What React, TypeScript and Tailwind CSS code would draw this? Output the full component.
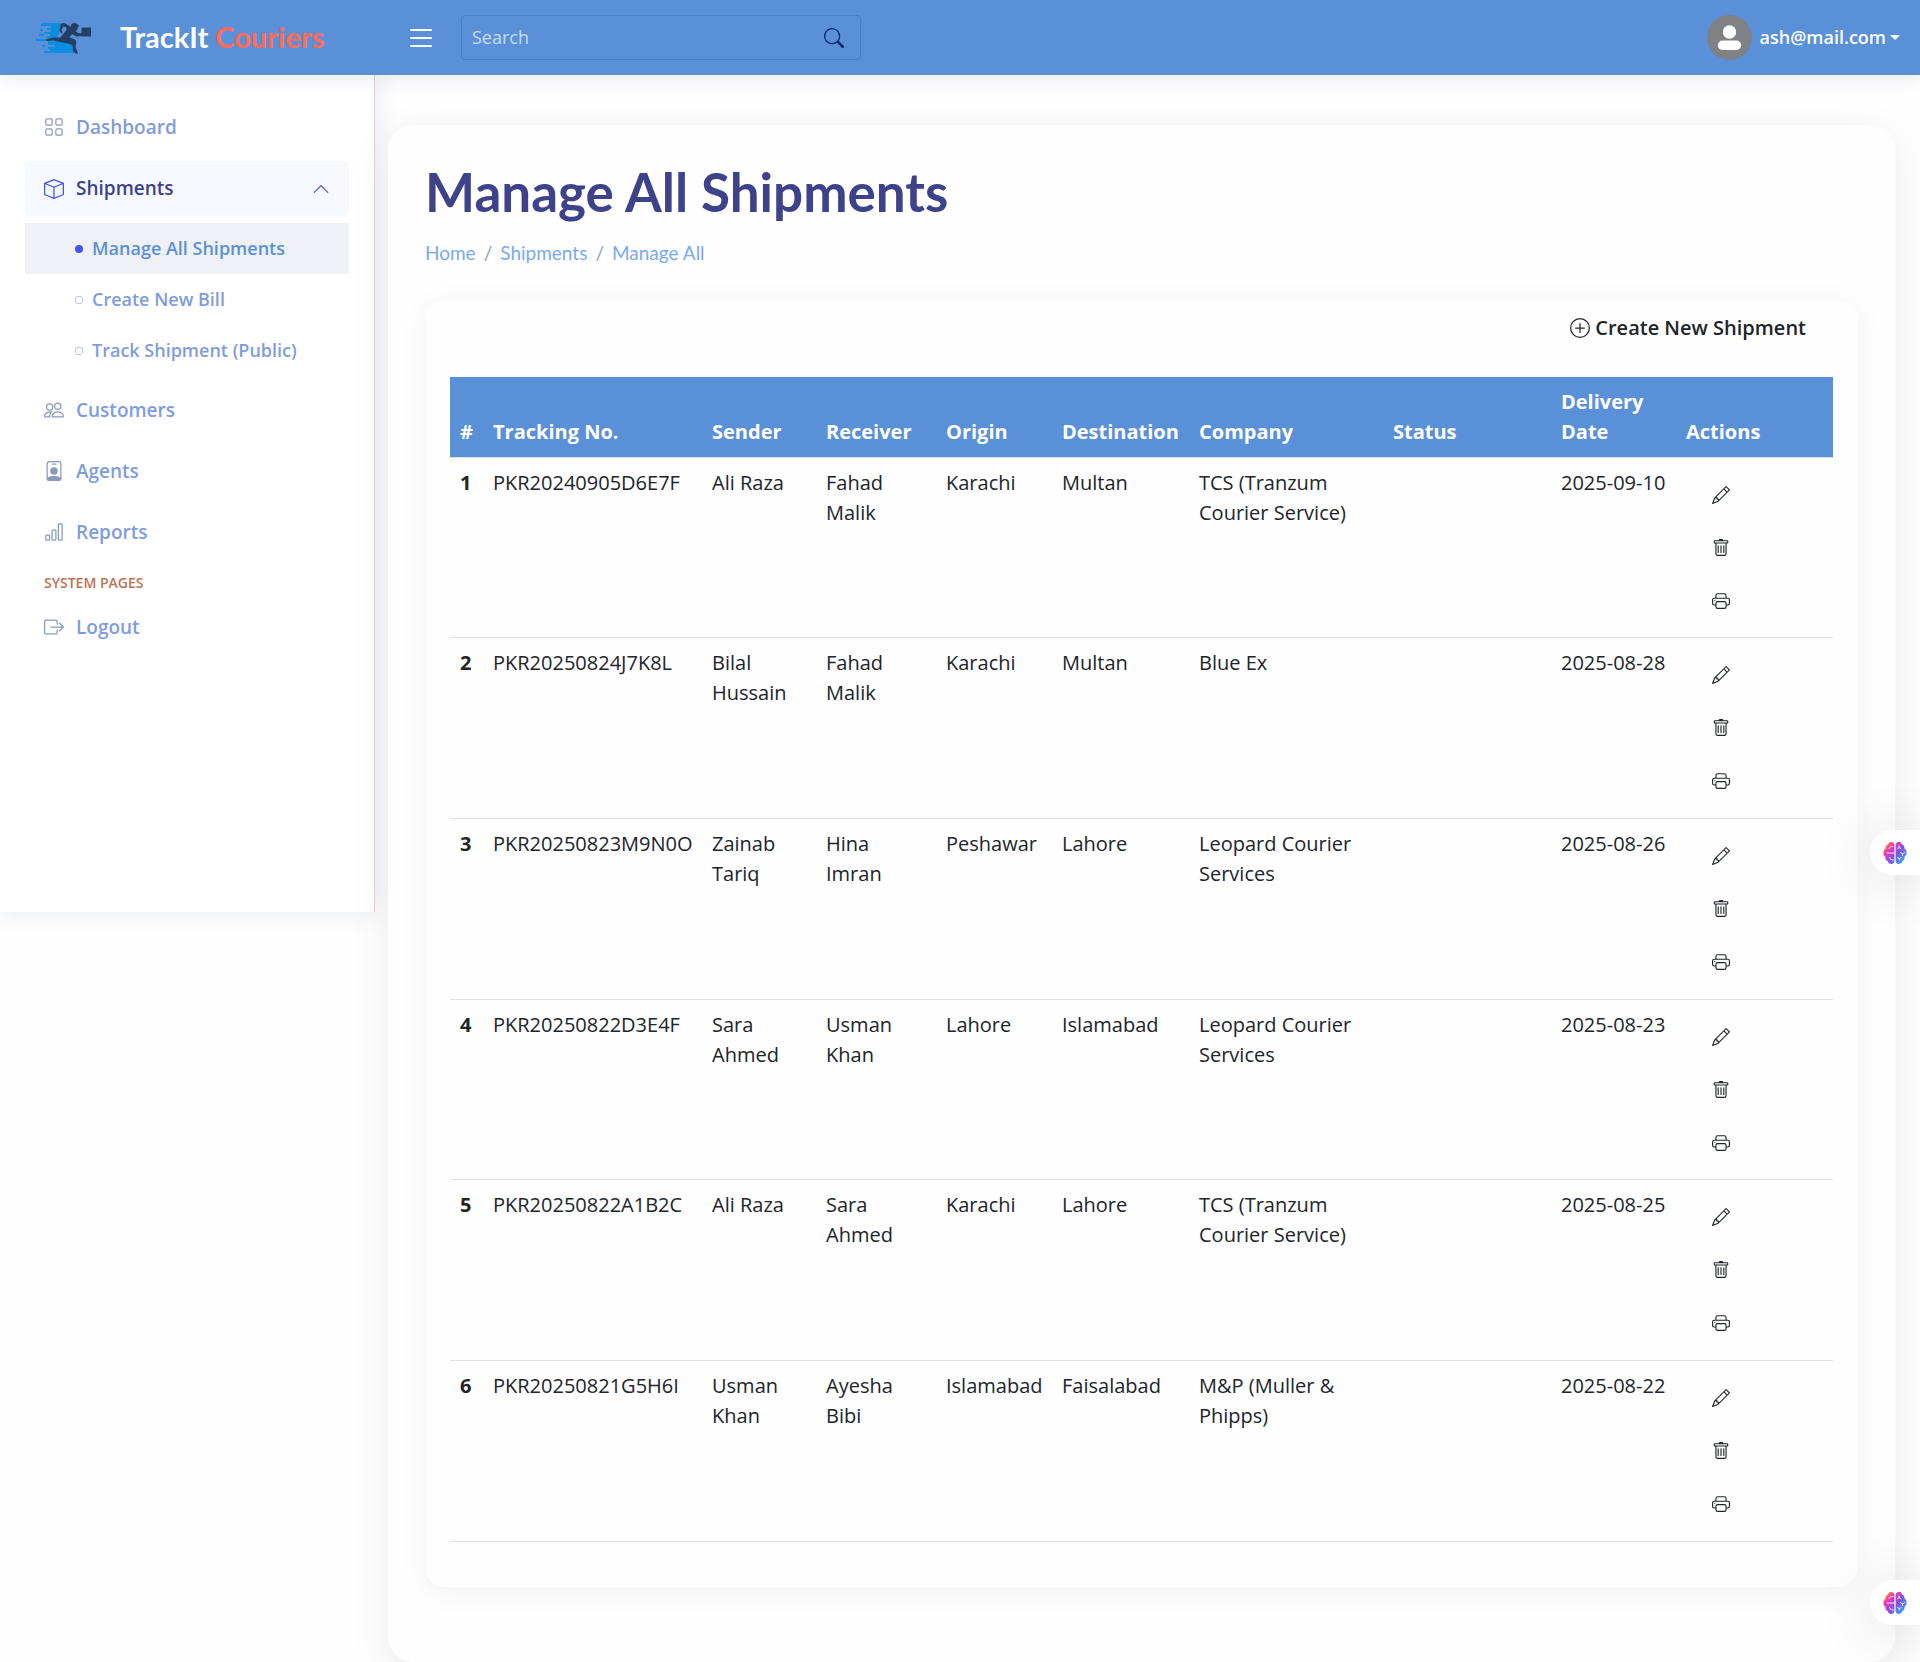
import React from "react";
import {
  BsBarChart, BsBox, BsBoxArrowRight, BsChevronUp, BsCircle, BsCircleFill, BsGrid, BsList,
  BsPencil, BsPeople, BsPersonBadge, BsPlusCircle, BsPrinter, BsSearch, BsTrash,
} from "react-icons/bs";

type Shipment = {
  tracking: string;
  sender: string;
  receiver: string;
  origin: string;
  destination: string;
  company: string;
  date: string;
};

const shipments: Shipment[] = [
  { tracking: "PKR20240905D6E7F", sender: "Ali Raza", receiver: "Fahad Malik", origin: "Karachi", destination: "Multan", company: "TCS (Tranzum Courier Service)", date: "2025-09-10" },
  { tracking: "PKR20250824J7K8L", sender: "Bilal Hussain", receiver: "Fahad Malik", origin: "Karachi", destination: "Multan", company: "Blue Ex", date: "2025-08-28" },
  { tracking: "PKR20250823M9N0O", sender: "Zainab Tariq", receiver: "Hina Imran", origin: "Peshawar", destination: "Lahore", company: "Leopard Courier Services", date: "2025-08-26" },
  { tracking: "PKR20250822D3E4F", sender: "Sara Ahmed", receiver: "Usman Khan", origin: "Lahore", destination: "Islamabad", company: "Leopard Courier Services", date: "2025-08-23" },
  { tracking: "PKR20250822A1B2C", sender: "Ali Raza", receiver: "Sara Ahmed", origin: "Karachi", destination: "Lahore", company: "TCS (Tranzum Courier Service)", date: "2025-08-25" },
  { tracking: "PKR20250821G5H6I", sender: "Usman Khan", receiver: "Ayesha Bibi", origin: "Islamabad", destination: "Faisalabad", company: "M&P (Muller & Phipps)", date: "2025-08-22" },
];

const columns = [
  { label: "#", width: "w-[33px]" },
  { label: "Tracking No.", width: "w-[219px]" },
  { label: "Sender", width: "w-[114px]" },
  { label: "Receiver", width: "w-[120px]" },
  { label: "Origin", width: "w-[116px]" },
  { label: "Destination", width: "w-[137px]" },
  { label: "Company", width: "w-[194px]" },
  { label: "Status", width: "w-[168px]" },
  { label: "Delivery Date", width: "w-[125px]" },
  { label: "Actions", width: "w-[157px]" },
];

function Logo() {
  return (
    <svg viewBox="0 0 56 32" className="h-8 w-14" aria-hidden="true">
      <g fill="#0a8fe0">
        <path d="M5 1h20l-1 9-3 6H10v-2h4v-2H8v-2h7V8h-4V6h4V4H5z" />
        <path d="M4 7h3v2H4zM3 12h5v2H3zM0 17h12v2H0z" />
        <path d="M12 19l26 1 2 11H8v-2h6v-2h-2v-2h7v-2h-7z" />
        <path d="M6 23h3v2H6z" />
      </g>
      <g fill="#233f66">
        <path d="M34.500 4a4 4 0 0 1 7-1.500l1.700 1.200-1.200 1-.6 3-2.500 1.300-3-1z" />
        <path d="M24.500 2.500C26 .6 28 .8 29.500 1.500l5.500 3.500c2 1 3.500 2.500 4.500 4l2.500 2 5.500.5v2.200l-7 .8-4.500-2.500-2.500 3.500 4.500 1.500c1.800.7 2.500 2 2.200 3.800L39.500 25l2 5 .5 1.500h-2.500L37 29l-.5-6-5-1.500-7.500-1.500-6.500-1.500-6 .5-1.500 0 .5-2 7-1.500 7 0 5.500-7L30.500 5.500 27.500 4.500 25.500 8 26.500 11 25 11.500 23.500 8z" />
        <path d="M45.500 5.500H55v9h-9.500z" />
      </g>
    </svg>
  );
}

function BrainPill({ id, className }: { id: string; className: string }) {
  return (
    <button
      type="button"
      aria-label="Open assistant"
      className={`absolute right-0 z-20 flex h-[45px] w-[50px] items-center rounded-l-full bg-white pl-[13px] shadow-[0_4px_60px_rgba(0,0,0,0.14)] ${className}`}
    >
      <svg viewBox="0 0 24 24" className="h-6 w-6" fill="none" aria-hidden="true">
        <defs>
          <linearGradient id={id} x1="2" y1="3" x2="22" y2="21" gradientUnits="userSpaceOnUse">
            <stop offset="0" stopColor="#ff9a1f" />
            <stop offset="0.25" stopColor="#ee35b4" />
            <stop offset="0.6" stopColor="#7a55f0" />
            <stop offset="1" stopColor="#25b4ff" />
          </linearGradient>
        </defs>
        <path
          fill={`url(#${id})`}
          d="M11.400 3.500C11 1.500 9 .5 7.300 1.100 6 1.400 5.200 2.500 5 3.500 3.200 4 2.200 5.700 2.600 7.500 1 8.500.3 10.200.4 12c0 1.700.8 3 2 3.800-.3 2 .7 3.700 2.300 4.400.6 1.900 2 2.900 3.700 2.800 1.700-.1 3-1.400 3-3.200zM12.600 3.500C13 1.500 15 .5 16.700 1.100 18 1.400 18.800 2.500 19 3.500c1.800.5 2.800 2.200 2.400 4 1.600 1 2.300 2.700 2.200 4.500 0 1.700-.8 3-2 3.800.3 2-.7 3.700-2.300 4.400-.6 1.900-2 2.900-3.700 2.800-1.700-.1-3-1.400-3-3.200z"
        />
        <g stroke="#fff" strokeWidth="0.9" strokeLinecap="round">
          <path d="M4 12h7M6 7.500C6.500 6 8 5.500 10 5.500M6.500 16.500c.5 2 2 2.500 4 2.500M14.500 8l1.500-1.500M16 6.500V5M16 6.500l2 1.200M17.500 11.500l2 1.500 2-1.500M19.500 13v1.500M14.500 16.500l1.800 1.200 2-1.200M16.300 17.700V19" />
        </g>
      </svg>
    </button>
  );
}

function NavItem({ icon, label }: { icon: React.ReactNode; label: string }) {
  return (
    <a href="#" className="flex h-14 items-center gap-3 rounded-[5px] px-[19px] text-[19px] font-semibold text-[#7f9cdf]">
      <span className="text-xl text-[#899bbd]">{icon}</span>
      {label}
    </a>
  );
}

function SubItem({ label, active = false }: { label: string; active?: boolean }) {
  return (
    <a
      href="#"
      className={`flex h-[51px] items-center gap-[9px] pl-[50px] text-[18px] font-semibold ${active ? "bg-[#f0f1f6] text-[#5a90d8]" : "text-[#7f9cdf]"}`}
    >
      {active ? <BsCircleFill className="text-[8px] text-[#4154f1]" /> : <BsCircle className="text-[8px]" />}
      {label}
    </a>
  );
}

function Header() {
  return (
    <header className="relative z-10 flex h-[75px] items-center bg-[#5a90d8] pr-5 shadow-[0_2px_20px_rgba(1,41,112,0.1)]">
      <a href="#" className="flex w-[405px] shrink-0 items-center gap-7 pl-9">
        <Logo />
        <span className="pb-[2px] font-['Lato',sans-serif] text-[29px] leading-9 font-bold text-white">
          TrackIt <span className="text-[#ff6b57]">Couriers</span>
        </span>
      </a>
      <button type="button" aria-label="Toggle sidebar" className="text-[32px] text-white">
        <BsList />
      </button>
      <form className="ml-6 flex h-[45px] w-[400px] items-center rounded-[4px] border border-[#4a7fc9] pr-4" onSubmit={(e) => e.preventDefault()}>
        <input
          type="text"
          aria-label="Search"
          placeholder="Search"
          className="min-w-0 flex-1 bg-transparent pl-[10px] text-[18px] text-white outline-none placeholder:text-[#c9dbf3]"
        />
        <button type="submit" aria-label="Submit search" className="text-xl text-[#012970]">
          <BsSearch />
        </button>
      </form>
      <button type="button" className="ml-auto flex items-center text-[18px] font-semibold text-white">
        <svg viewBox="0 0 45 45" className="mr-2 h-[45px] w-[45px]" aria-hidden="true">
          <circle cx="22.500" cy="22.500" r="22.500" fill="#808184" />
          <circle cx="22.500" cy="17" r="6.700" fill="#fff" />
          <rect x="10.800" y="25.500" width="23.400" height="9.500" rx="4.700" fill="#fff" />
        </svg>
        ash@mail.com
        <span className="ml-1 border-x-[5px] border-t-[5px] border-x-transparent border-t-white" />
      </button>
    </header>
  );
}

function Sidebar() {
  return (
    <aside className="h-[837px] w-[375px] shrink-0 border-r border-[#e8cfd4] bg-white px-[25px] pt-6 shadow-[0_0_25px_rgba(1,41,112,0.1)]">
      <nav className="flex flex-col">
        <NavItem icon={<BsGrid />} label="Dashboard" />
        <button type="button" aria-expanded="true" className="mt-[6px] flex h-[55px] items-center gap-3 rounded-[5px] bg-[#f6f9ff] px-[19px] text-[19px] font-semibold text-[#3d428b]">
          <BsBox className="text-xl text-[#4154f1]" />
          Shipments
          <BsChevronUp className="ml-auto text-[18px] text-[#4154f1]" />
        </button>
        <div className="mt-[7px] mb-[6px] flex flex-col">
          <SubItem label="Manage All Shipments" active />
          <SubItem label="Create New Bill" />
          <SubItem label="Track Shipment (Public)" />
        </div>
        <div className="flex flex-col gap-[5px]">
          <NavItem icon={<BsPeople />} label="Customers" />
          <NavItem icon={<BsPersonBadge />} label="Agents" />
          <NavItem icon={<BsBarChart />} label="Reports" />
        </div>
        <h2 className="mt-[13px] ml-[19px] text-[14px] leading-5 font-semibold text-[#bd7354]">SYSTEM PAGES</h2>
        <div className="mt-[6px]">
          <NavItem icon={<BsBoxArrowRight />} label="Logout" />
        </div>
      </nav>
    </aside>
  );
}

function ShipmentTable() {
  return (
    <table className="w-full table-fixed border-collapse text-left text-[20px] leading-[30px]">
      <thead className="bg-[#5a90d8] text-white">
        <tr className="h-20 border-b border-[#dee2e6]">
          {columns.map((c) => (
            <th key={c.label} scope="col" className={`p-[10px] align-bottom font-bold ${c.width}`}>
              {c.label}
            </th>
          ))}
        </tr>
      </thead>
      <tbody>
        {shipments.map((s, i) => (
          <tr key={s.tracking} className="h-[181px] border-b border-[#dee2e6] align-top nth-[3n+1]:h-[180px]">
            <th scope="row" className="p-[10px] font-bold">{i + 1}</th>
            <td className="p-[10px]">{s.tracking}</td>
            <td className="p-[10px]">{s.sender}</td>
            <td className="p-[10px]">{s.receiver}</td>
            <td className="p-[10px]">{s.origin}</td>
            <td className="p-[10px]">{s.destination}</td>
            <td className="p-[10px]">{s.company}</td>
            <td className="p-[10px]" />
            <td className="p-[10px]">{s.date}</td>
            <td className="p-[10px]">
              <div className="flex w-[70px] flex-col text-[18px]">
                <button type="button" aria-label="Edit shipment" className="flex h-[53px] items-center justify-center"><BsPencil /></button>
                <button type="button" aria-label="Delete shipment" className="flex h-[53px] items-center justify-center"><BsTrash /></button>
                <button type="button" aria-label="Print shipment" className="flex h-[53px] items-center justify-center"><BsPrinter /></button>
              </div>
            </td>
          </tr>
        ))}
      </tbody>
    </table>
  );
}

export default function App() {
  return (
    <div className="relative min-h-screen bg-[#fefefe] font-['Open_Sans',sans-serif] text-[#212529]">
      <Header />
      <div className="flex items-start">
        <Sidebar />
        <main className="relative mt-[50px] mr-[25px] ml-[13px] min-w-0 flex-1 rounded-[25px] bg-[#fefefe] px-[37px] pt-[37px] pb-[75px] shadow-[0_10px_40px_rgba(0,0,0,0.08)]">
          <h1 className="font-['Lato',sans-serif] text-[53px] leading-[60px] font-bold text-[#3d428b]">Manage All Shipments</h1>
          <nav aria-label="Breadcrumb" className="mt-[18px] flex gap-2 font-['Lato',sans-serif] text-[19px] leading-[26px] text-[#7aaaf0]">
            <a href="#">Home</a>
            <span className="text-[#899bbd]">/</span>
            <a href="#">Shipments</a>
            <span className="text-[#899bbd]">/</span>
            <a href="#">Manage All</a>
          </nav>
          <section className="mt-[34px] rounded-[20px] bg-[#fefefe] px-[25px] pb-[45px] shadow-[0_5px_30px_rgba(0,0,0,0.05)]">
            <div className="flex h-[77px] justify-end pt-[13px] pr-[27px]">
              <a href="#" className="flex h-[30px] items-center gap-[5px] text-[20px] font-semibold">
                <BsPlusCircle />
                Create New Shipment
              </a>
            </div>
            <ShipmentTable />
          </section>
        </main>
      </div>
      <BrainPill id="brain-a" className="top-[830px]" />
      <BrainPill id="brain-b" className="top-[1580px]" />
    </div>
  );
}
